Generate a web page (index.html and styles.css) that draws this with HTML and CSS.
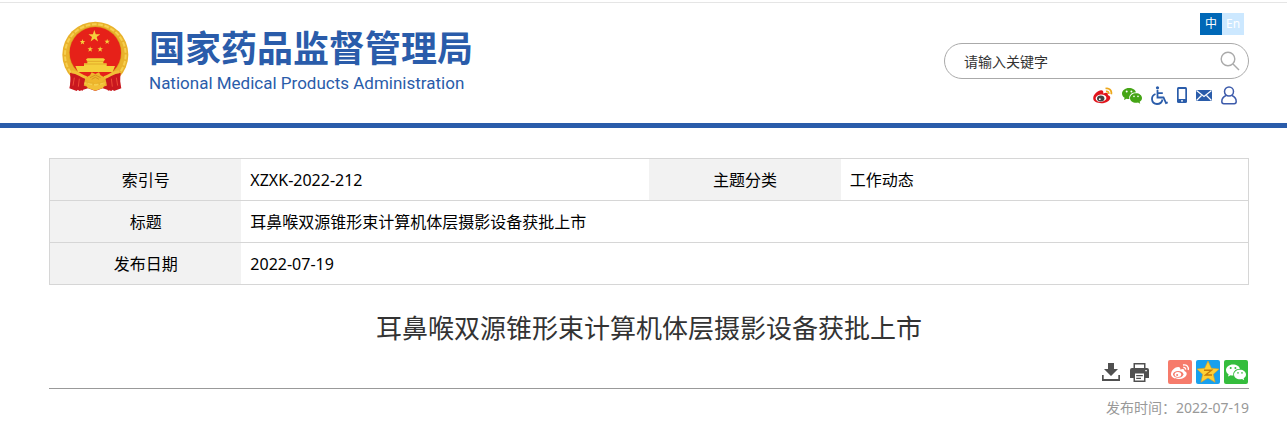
FILE: index.html
```
<!DOCTYPE html>
<html lang="zh-CN">
<head>
    <meta charset="UTF-8">
    <meta name="viewport" content="width=device-width, initial-scale=1.0">
    <title>耳鼻喉双源锥形束计算机体层摄影设备获批上市</title>
    <link rel="stylesheet" href="styles.css">
</head>
<body>
    <!-- shared icon shapes -->
    <svg class="defs" aria-hidden="true">
        <symbol id="star" viewBox="0 0 20 20">
            <path d="M10 0l2.400 7H20l-6.100 4.600L16.200 19 10 14.600 3.800 19l2.300-7.400L0 7h7.600z"/>
        </symbol>
        <symbol id="wechat" viewBox="0 0 20 17">
            <path fill-rule="evenodd" d="M7 1C3.100 1 0 3.500 0 6.500c0 1.800 1 3.300 2.600 4.300L2 13l2.600-1.300c.8.2 1.600.3 2.400.3h.4C6.500 8.200 9.800 5.300 14 5.300 13.400 2.800 10.500 1 7 1zM4.700 3.600a1 1 0 110 2 1 1 0 010-2zm4.700 0a1 1 0 110 2 1 1 0 010-2z"/>
            <path fill-rule="evenodd" d="M14 6.200c-3.300 0-6 2.100-6 4.800s2.700 4.800 6 4.800c.7 0 1.400-.1 2-.3l2.200 1.200-.5-1.900c1.400-.9 2.300-2.200 2.300-3.800 0-2.700-2.700-4.800-6-4.800zm-2 2.400a.8.8 0 110 1.600.8.8 0 010-1.600zm4 0a.8.8 0 110 1.600.8.8 0 010-1.600z"/>
        </symbol>
    </svg>

    <header class="header">
        <a class="logo" href="#">
            <svg class="emblem" viewBox="36 32 201 213" aria-hidden="true">
                <path fill="#c9171e" d="M66 182l-6 48 18 4 10 8 26-8 22 8 22-8 26 8 10-8 18-4-6-48z"/>
                <circle cx="136" cy="133" r="99" fill="#e9b22b"/>
                <circle cx="136" cy="133" r="91" fill="none" stroke="#f6cf50" stroke-width="6" stroke-dasharray="14 5"/>
                <circle cx="136" cy="127" r="79" fill="#d99c1e"/>
                <circle cx="136" cy="127" r="77" fill="#e62119"/>
                <g fill="#f5cf3c">
                    <use href="#star" x="115" y="59" width="36" height="36"/>
                    <use href="#star" x="89" y="86" width="17" height="17"/>
                    <use href="#star" x="163" y="85" width="17" height="17"/>
                    <use href="#star" x="112" y="108" width="17" height="17"/>
                    <use href="#star" x="142" y="108" width="17" height="17"/>
                    <path d="M108 147l5-3h47l5 3-3 5H111zM112 152h48v8h-48zM102 159h68v13h-68zM76 167h119l-7 18H84z"/>
                </g>
                <path stroke="#d9971f" stroke-width="2" d="M110 153h52M102 161h68"/>
                <path fill="#e62119" d="M84 187h104l-14 14H98z"/>
                <path fill="#c9171e" d="M60 188c20-4 34 8 46 14l-8 40-10-8-8 8-22-8c4-14 4-28 2-46zM212 188c-20-4-34 8-46 14l8 40 10-8 8 8 22-8c-4-14-4-28-2-46z"/>
                <path fill="none" stroke="#f2bf37" stroke-width="9" d="M64 184c20 0 28 14 46 18M208 184c-20 0-28 14-46 18"/>
                <path fill="#efb62d" d="M106 202l14-7 5-9 11 5 11-5 5 9 14 7-10 13-14 1-6 6-6-6-14-1z"/>
                <path fill="none" stroke="#c98018" stroke-width="2" d="M120 202l16-8 16 8M125 207l11-6 11 6"/>
                <path fill="#f2bf37" d="M104 214l16 9 16 3 16-3 16-9-9 19-23 8-23-8z"/>
                <path fill="none" stroke="#ef4b35" stroke-width="3" d="M73 202l-4 24M88 205l-3 24M199 202l4 24M184 205l3 24"/>
            </svg>
            <span class="logo-text">
                <span class="logo-cn">国家药品监督管理局</span>
                <span class="logo-en">National Medical Products Administration</span>
            </span>
        </a>
        <div class="header-right">
            <nav class="lang">
                <a class="on" href="#">中</a>
                <a href="#">En</a>
            </nav>
            <form class="search">
                <input type="text" placeholder="请输入关键字" aria-label="请输入关键字">
                <button type="button" aria-label="搜索">
                    <svg width="20" height="20" viewBox="0 0 20 20" fill="none" stroke="#aaa" stroke-width="1.400"><circle cx="8" cy="8" r="6.800"/><path d="M13 13l6 6"/></svg>
                </button>
            </form>
            <nav class="quick">
                <a href="#" aria-label="微博">
                    <svg width="20" height="17" viewBox="0 0 20 17">
                        <path fill="#e1141c" d="M8.300 3.200C5.500 3 .2 7 .2 11.300c0 3.300 4.100 4.900 8.100 4.900 5 0 9-2.600 9-5.500 0-1.500-1.100-2.300-2.500-2.800.6-2-1-2.900-4.600-1.500.5-1.700-.1-3.100-1.900-3.200z"/>
                        <ellipse cx="8" cy="11.200" rx="5.400" ry="3.600" fill="#fff" transform="rotate(-6 8 11)"/>
                        <ellipse cx="7.700" cy="11.500" rx="3.700" ry="3" fill="#444"/>
                        <circle cx="6.800" cy="12.200" r=".9" fill="#fff"/>
                        <path fill="none" stroke="#eda81c" stroke-width="1.800" d="M12.500 1.500c3.600-1 6.700 2 5.700 5.800M13 4.400c1.700-.4 3 .8 2.600 2.500"/>
                    </svg>
                </a>
                <a href="#" aria-label="微信">
                    <svg width="20" height="17" fill="#45a516"><use href="#wechat"/></svg>
                </a>
                <a href="#" aria-label="无障碍">
                    <svg width="17" height="19" viewBox="0 0 17 19" fill="none" stroke="#2a5caa" stroke-width="1.800">
                        <circle cx="6.500" cy="1.800" r="1.600" fill="#2a5caa" stroke="none"/>
                        <path d="M6.500 4v7.500h6l2.500 5.600 1.700-.8M6.500 7.200h5.300M4.500 8C-.5 10-.2 17.800 6 18c3 0 5-2 5.500-4.500"/>
                    </svg>
                </a>
                <a href="#" aria-label="手机版">
                    <svg width="10" height="16" viewBox="0 0 10 16"><rect width="10" height="16" rx="1.500" fill="#2a5caa"/><path fill="#fff" d="M1.700 2h6.600v10H1.700zM4 13.200h2v1.300H4z"/></svg>
                </a>
                <a href="#" aria-label="邮箱">
                    <svg width="16" height="11" viewBox="0 0 16 11"><rect width="16" height="11" fill="#2a5caa"/><path fill="none" stroke="#fff" stroke-width="1.200" d="M.5.500L8 6.500 15.500.500M.5 10.500l5-5M15.500 10.500l-5-5"/></svg>
                </a>
                <a href="#" aria-label="个人中心">
                    <svg width="16" height="19" viewBox="0 0 16 19" fill="none" stroke="#3d5bab" stroke-width="1.500"><circle cx="8" cy="5.500" r="4.500"/><path d="M5 9.500C2 10.800.8 13 .8 15.500c0 1.500.7 2.200 2 2.200h10.400c1.300 0 2-.7 2-2.200 0-2.500-1.200-4.700-4.200-6"/></svg>
                </a>
            </nav>
        </div>
    </header>

    <main class="container">
        <table class="info">
            <tr>
                <th scope="row">索引号</th>
                <td>XZXK-2022-212</td>
                <th scope="row">主题分类</th>
                <td>工作动态</td>
            </tr>
            <tr>
                <th scope="row">标题</th>
                <td colspan="3">耳鼻喉双源锥形束计算机体层摄影设备获批上市</td>
            </tr>
            <tr>
                <th scope="row">发布日期</th>
                <td colspan="3">2022-07-19</td>
            </tr>
        </table>

        <h1>耳鼻喉双源锥形束计算机体层摄影设备获批上市</h1>

        <div class="tools">
            <button type="button" aria-label="下载">
                <svg width="18" height="18" viewBox="0 0 18 18" fill="#505050"><path d="M6 0h6v6h4l-7 7-7-7h4z"/><path d="M0 12h1.700v4h14.600v-4H18v6H0z"/></svg>
            </button>
            <button type="button" aria-label="打印">
                <svg width="19" height="19" viewBox="0 0 19 19">
                    <path fill="#505050" d="M3.500 0h12v5H17a2 2 0 012 2v8h-3.500v4h-12v-4H0V7a2 2 0 012-2h1.500z"/>
                    <path fill="#fff" d="M5 1.500h9V5H5zM5 10.500h9v7H5zM15.300 7h1.500v1.300h-1.500z"/>
                    <path stroke="#505050" stroke-width="1.200" d="M6.200 12.700h6.600M6.200 15.300h4.800"/>
                </svg>
            </button>
            <div class="share">
                <a class="weibo" href="#" aria-label="分享到微博">
                    <svg width="20" height="18" viewBox="0 0 20 18">
                        <path fill="#fff" d="M8.300 4C5.500 3.800 1 7.500 1 11.300c0 3 3.600 4.700 7.300 4.700 4.700 0 8.400-2.400 8.400-5.300 0-1.500-1-2.200-2.400-2.700.5-1.800-1-2.600-4.100-1.400.4-1.500-.3-2.500-1.900-2.600z"/>
                        <ellipse cx="8.200" cy="11.300" rx="5.200" ry="3.400" fill="#f67b6b"/>
                        <ellipse cx="7.900" cy="11.500" rx="3.300" ry="2.500" fill="#fff"/>
                        <circle cx="7.100" cy="12" r="1" fill="#f67b6b"/>
                        <path fill="none" stroke="#fff" stroke-width="1.300" d="M13 2c3.500-.8 6 1.700 5.200 5M13.300 4.500c1.500-.3 2.600.7 2.300 2.200"/>
                    </svg>
                </a>
                <a class="qzone" href="#" aria-label="分享到QQ空间">
                    <svg width="24" height="24" viewBox="0 0 24 24">
                        <path fill="#ffd035" stroke="#e0a020" stroke-width=".6" d="M12 1l3.300 7.200 7.700.8-5.700 5.300 1.800 8L12 18l-7.100 4.300 1.800-8L1 9l7.700-.8z"/>
                        <path fill="none" stroke="#c77a08" stroke-width="1.400" d="M8 10.200h7.500L9.500 15H16"/>
                    </svg>
                </a>
                <a class="wechat" href="#" aria-label="分享到微信">
                    <svg width="20" height="18" fill="#fff"><use href="#wechat"/></svg>
                </a>
            </div>
        </div>
        <p class="date">发布时间：2022-07-19</p>
    </main>
</body>
</html>
```
FILE: styles.css
```
* {
    box-sizing: border-box;
}
body {
    margin: 0;
    padding-top: 2px;
    font-family: "Noto Sans", "Noto Sans CJK SC", "Microsoft YaHei", sans-serif;
    font-size: 16px;
    color: #000;
    background: #fff;
}
a {
    color: inherit;
    text-decoration: none;
}
svg {
    display: block;
}
button {
    padding: 0;
    border: none;
    background: none;
    cursor: pointer;
}
.defs {
    display: none;
}

/* header */
.header {
    display: flex;
    justify-content: space-between;
    align-items: flex-start;
    height: 126px;
    padding: 10px 38px 0 62px;
    border-top: 1px solid #e5e5e5;
    border-bottom: 5px solid #2a5caa;
}
.logo {
    display: flex;
    gap: 20px;
    padding-top: 8px;
    color: #2a5caa;
    white-space: nowrap;
}
.emblem {
    width: 67px;
    height: 71px;
}
.logo-text {
    display: flex;
    flex-direction: column;
}
.logo-cn {
    font-family: "Noto Sans CJK SC", "Microsoft YaHei", sans-serif;
    font-size: 36px;
    font-weight: bold;
    line-height: 50px;
}
.logo-en {
    font-family: Roboto, Arial, sans-serif;
    font-size: 17px;
    line-height: 24px;
}
.header-right {
    display: flex;
    flex-direction: column;
    align-items: flex-end;
}
.lang {
    display: flex;
    margin-right: 5px;
}
.lang a {
    width: 22px;
    height: 22px;
    font-size: 12px;
    line-height: 22px;
    text-align: center;
    color: #fff;
    background: #cce8ff;
}
.lang a.on {
    background: #0068b7;
}
.search {
    display: flex;
    align-items: center;
    width: 305px;
    height: 36px;
    margin-top: 8px;
    padding: 0 8px 0 19px;
    border: 1px solid #aaa;
    border-radius: 18px;
}
.search input {
    flex: 1;
    min-width: 0;
    padding: 0;
    border: none;
    outline: none;
    background: none;
    font-family: inherit;
    font-size: 14px;
}
.search input::placeholder {
    color: #333;
    opacity: 1;
}
.quick {
    display: flex;
    align-items: center;
    gap: 9px;
    height: 20px;
    margin: 6px 12px 0 0;
}

/* content */
.container {
    padding: 30px 38px 0 49px;
}
.info {
    width: 100%;
    table-layout: fixed;
    border-collapse: collapse;
    border: 1px solid #d6d6d6;
}
.info tr {
    border-bottom: 1px solid #d6d6d6;
}
.info th,
.info td {
    height: 42px;
    padding: 0;
    line-height: 24px;
}
.info th {
    width: 16%;
    font-weight: normal;
    background: #f2f2f2;
}
.info td {
    width: 34%;
    padding-left: 9px;
}
h1 {
    margin: 23px 0 12px;
    font-size: 26px;
    font-weight: normal;
    line-height: 40px;
    text-align: center;
    color: #333;
}
.tools {
    display: flex;
    justify-content: flex-end;
    align-items: center;
    gap: 10px;
    padding: 0 1px 4px 0;
    border-bottom: 1px solid #999;
}
.share {
    display: flex;
    gap: 4px;
    margin-left: 9px;
}
.share a {
    display: flex;
    justify-content: center;
    align-items: center;
    width: 24px;
    height: 24px;
    border-radius: 2px;
}
.share .weibo {
    background: #f67b6b;
}
.share .qzone {
    background: #18a0ee;
}
.share .wechat {
    background: #35bd3d;
}
.date {
    margin: 7px 0 0;
    font-size: 14px;
    line-height: 24px;
    text-align: right;
    color: #999;
}
```
